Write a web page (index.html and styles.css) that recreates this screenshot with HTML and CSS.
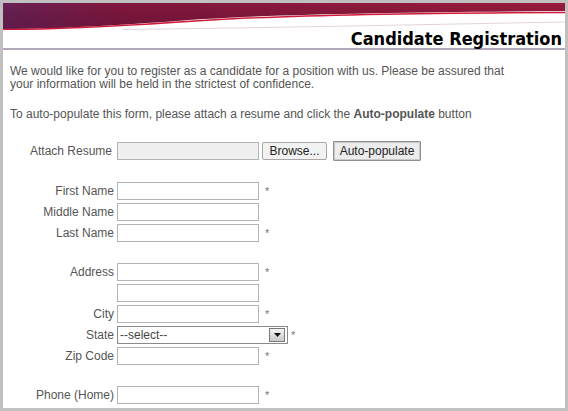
FILE: index.html
```html
<!DOCTYPE html>
<html>
<head>
<meta charset="utf-8">
<link rel="stylesheet" href="styles.css">
</head>
<body>
<div class="frame">
  <div class="header">
    <svg class="wave" width="562" height="27" viewBox="0 0 562 27" preserveAspectRatio="none">
      <defs>
        <linearGradient id="g1" x1="0" y1="0" x2="1" y2="0">
          <stop offset="0" stop-color="#6a2257"/>
          <stop offset="0.2" stop-color="#82173f"/>
          <stop offset="1" stop-color="#9a1b3c"/>
        </linearGradient>
        <linearGradient id="g2" x1="0" y1="0" x2="0" y2="1">
          <stop offset="0" stop-color="#000" stop-opacity="0"/>
          <stop offset="1" stop-color="#3a0a2a" stop-opacity="0.25"/>
        </linearGradient>
      </defs>
      <path d="M0,0 H562 V8 C420,9 280,11 200,16 C120,22 60,26 0,26 Z" fill="url(#g1)"/>
      <path d="M0,0 H562 V8 C420,9 280,11 200,16 C120,22 60,26 0,26 Z" fill="url(#g2)"/>
      <path d="M0,26.5 C60,26.5 120,23 200,17.5 C280,12.5 420,10 562,9.5" fill="none" stroke="#d01a3a" stroke-width="1.4"/>
      <path d="M120,26.5 C250,25 400,22 562,19" fill="none" stroke="#dcc8ce" stroke-width="0.8"/>
    </svg>
    <h1 class="title">Candidate Registration</h1>
  </div>
  <div class="content">
    <p class="intro">We would like for you to register as a candidate for a position with us. Please be assured that<br>your information will be held in the strictest of confidence.</p>
    <p class="intro second">To auto-populate this form, please attach a resume and click the <b>Auto-populate</b> button</p>

    <div class="form attach">
      <label class="lbl">Attach Resume</label>
      <div class="filebox">
        <span class="filefield"></span>
        <button class="btn browse">Browse...</button>
        <button class="btn auto">Auto-populate</button>
      </div>
    </div>

    <div class="form group">
      <label class="lbl">First Name</label><input class="txt"><span class="req">*</span>
      <label class="lbl">Middle Name</label><input class="txt"><span class="req"></span>
      <label class="lbl">Last Name</label><input class="txt"><span class="req">*</span>
    </div>

    <div class="form group">
      <label class="lbl">Address</label><input class="txt"><span class="req">*</span>
      <span class="lbl"></span><input class="txt"><span class="req"></span>
      <label class="lbl">City</label><input class="txt"><span class="req">*</span>
      <label class="lbl">State</label>
      <span class="selwrap"><select class="sel"><option>--select--</option></select><span class="arrow"><svg width="9" height="6" viewBox="0 0 9 6"><path d="M1,1 H8 L4.5,5 Z" fill="#111"/></svg></span><span class="req">*</span></span>
      <label class="lbl">Zip Code</label><input class="txt"><span class="req">*</span>
    </div>

    <div class="form group">
      <label class="lbl">Phone (Home)</label><input class="txt"><span class="req">*</span>
    </div>
  </div>
</div>
</body>
</html>
```
FILE: styles.css
```css
html, body {
  margin: 0;
  padding: 0;
  background: #fff;
}
.frame {
  width: 568px;
  height: 411px;
  box-sizing: border-box;
  border: 3px solid #c0c0c0;
  overflow: hidden;
  background: #fff;
  font-family: "Liberation Sans", Arial, sans-serif;
  font-size: 12px;
  color: #555;
}
.header {
  border-bottom: 2px solid #b3a7bc;
  height: 47px;
  box-sizing: border-box;
}
.wave {
  display: block;
}
.title {
  margin: 0;
  padding-right: 3px;
  text-align: right;
  font-family: "DejaVu Sans Condensed", "DejaVu Sans", Verdana, sans-serif;
  font-weight: bold;
  font-size: 18px;
  line-height: 17px;
  color: #000;
}
.content {
  padding: 0 7px;
}
.intro {
  margin: 15px 0 0;
  line-height: 13px;
  width: 545px;
  white-space: nowrap;
}
.intro.second {
  margin-top: 17px;
}
.form {
  display: grid;
  grid-template-columns: 104px auto 1fr;
  column-gap: 3px;
  row-gap: 3px;
  align-items: center;
}
.attach {
  margin-top: 20px;
  grid-template-columns: 102px auto;
  column-gap: 5px;
}
.lbl {
  text-align: right;
  white-space: nowrap;
}
.filebox {
  display: flex;
  align-items: center;
}
.filefield {
  width: 140px;
  height: 16px;
  border: 1px solid #b4b4b4;
  background: #f0f0f0;
}
.btn {
  font-family: "Liberation Sans", Arial, sans-serif;
  font-size: 12px;
  color: #222;
  padding: 0;
  margin: 0;
}
.browse {
  margin-left: 3px;
  width: 65px;
  height: 18px;
  border: 1px solid #a8a8a8;
  background: #f2f2f2;
  border-radius: 2px;
}
.auto {
  margin-left: 6px;
  width: 88px;
  height: 20px;
  border: 1px solid #8f8f8f;
  background: #ececec;
  box-shadow: inset 0 0 0 1px #c8c8c8;
  border-radius: 1px;
}
.group {
  margin-top: 21px;
}
.txt {
  width: 142px;
  height: 18px;
  box-sizing: border-box;
  border: 1px solid #b4b4b4;
  margin: 0;
  padding: 0 2px;
  background: #fff;
}
.req {
  color: #777;
  font-size: 11px;
  padding-left: 3px;
  line-height: 18px;
  height: 18px;
}
.selwrap {
  position: relative;
  display: flex;
  align-items: center;
  grid-column: 2 / span 2;
}
.sel {
  -webkit-appearance: none;
  appearance: none;
  width: 171px;
  height: 18px;
  box-sizing: border-box;
  border: 1px solid #8a8a8a;
  margin: 0;
  padding: 0 2px;
  background: #fff;
  font-family: "Liberation Sans", Arial, sans-serif;
  font-size: 12px;
  color: #444;
  border-radius: 0;
}
.arrow {
  position: absolute;
  left: 152px;
  top: 2px;
  width: 16px;
  height: 14px;
  box-sizing: border-box;
  border: 1px solid #7a7a7a;
  background: linear-gradient(#f4f4f4, #c8c8c8);
  display: flex;
  align-items: center;
  justify-content: center;
}
.arrow svg {
  display: block;
}
```
